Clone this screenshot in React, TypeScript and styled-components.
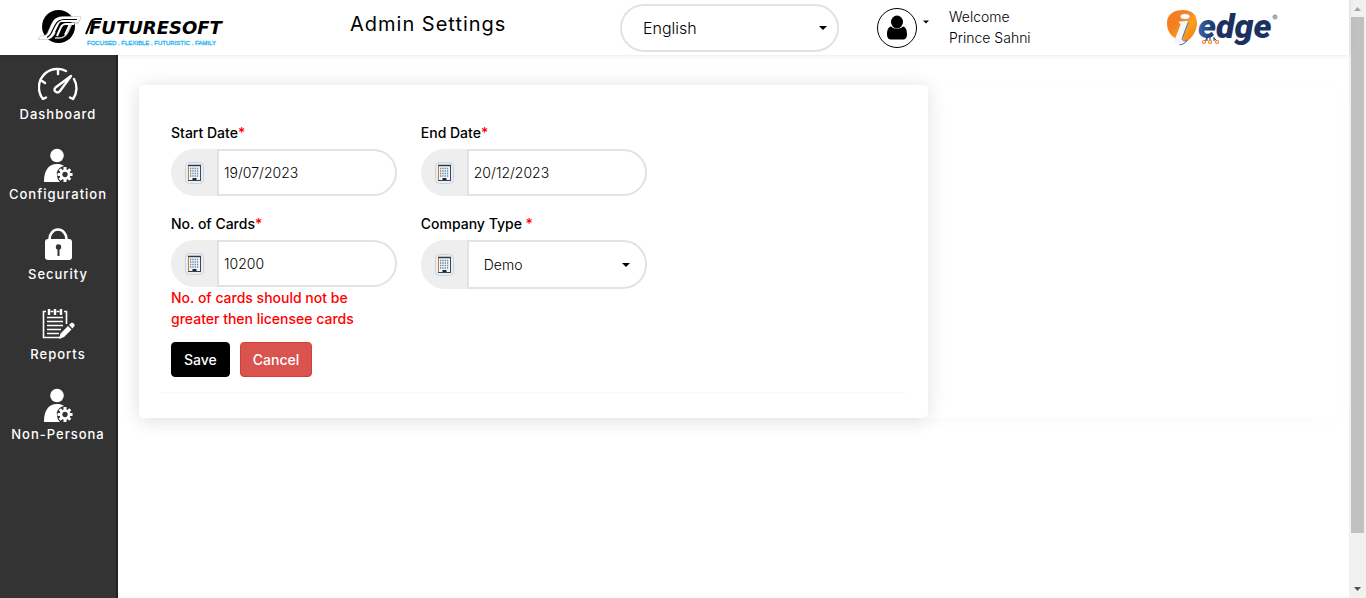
import React from "react";
import styled, { createGlobalStyle } from "styled-components";

const GlobalStyle = createGlobalStyle`
  *, *::before, *::after { box-sizing: border-box; }
  body {
    margin: 0;
    background: #fff;
    color: #000;
    font-family: Inter, "Liberation Sans", sans-serif;
    font-size: 14px;
    line-height: 21px;
  }
  button, input, select { font-family: inherit; }
`;

const Shell = styled.div`
  display: flex;
  height: 100vh;
`;

const Page = styled.div`
  flex: 1;
  min-width: 0;
  display: flex;
  flex-direction: column;
`;

const Header = styled.header`
  position: relative;
  display: grid;
  grid-template-columns: 350fr 270fr 257fr 290fr 182fr;
  height: 55px;
  flex: none;
  background: #fff;
  box-shadow: 0 0 5px rgba(0, 0, 0, 0.12);
`;

const LogoLink = styled.a<{ $indent?: number }>`
  display: block;
  height: 48px;
  padding-left: ${(p) => p.$indent ?? 0}px;
  svg { display: block; overflow: visible; }
`;

const Title = styled.h1`
  margin: 0;
  padding-top: 12px;
  font-size: 20px;
  line-height: 24px;
  font-weight: 400;
  letter-spacing: 1px;
  white-space: nowrap;
`;

const SelectWrap = styled.div`
  display: grid;
  flex: 1;
  min-width: 0;
  align-items: center;
  > * { grid-area: 1 / 1; }
  > svg { justify-self: end; margin-right: 12px; pointer-events: none; }
`;

const LanguageWrap = styled(SelectWrap)`
  width: 219px;
  height: 48px;
  margin-top: 4px;
`;

const CompanyWrap = styled(SelectWrap)`
  > svg { margin-right: 17px; }
`;

const Select = styled.select<{ $large?: boolean }>`
  appearance: none;
  width: 100%;
  height: ${(p) => (p.$large ? 48 : 49)}px;
  padding: 0 ${(p) => (p.$large ? 21 : 15)}px;
  border: 2px solid #e2e2e2;
  border-radius: ${(p) => (p.$large ? "24px" : "0 24px 24px 0")};
  background: #fff;
  color: #000;
  font-size: ${(p) => (p.$large ? 16 : 14)}px;
  font-weight: 300;
`;

const User = styled.div`
  display: flex;
  align-items: flex-start;
  padding-top: 8px;
`;

const AvatarButton = styled.button`
  display: flex;
  gap: 6px;
  padding: 0;
  border: 0;
  background: none;
  > svg:last-child { margin-top: 12px; }
`;

const Avatar = styled.span`
  display: flex;
  align-items: center;
  justify-content: center;
  width: 40px;
  height: 40px;
  border: 1px solid #000;
  border-radius: 50%;
`;

const Greeting = styled.p`
  margin: -2px 0 0 20px;
  font-weight: 300;
`;

const Body = styled.div`
  display: flex;
  flex: 1;
`;

const Sidebar = styled.nav`
  flex: none;
  width: 118px;
  padding-top: 12px;
  border-right: 2px solid #222;
  background: #333;
`;

const NavItem = styled.a`
  display: flex;
  flex-direction: column;
  align-items: center;
  height: 80px;
  color: #fff;
  font-size: 13px;
  line-height: 20px;
  font-weight: 500;
  letter-spacing: 1px;
  text-decoration: none;
  white-space: nowrap;
`;

const Main = styled.main`
  flex: 1;
  min-width: 0;
  padding: 30px 12px 30px 21px;
`;

const Panel = styled.div`
  display: grid;
  grid-template-columns: 2fr 1fr;
  gap: 14px;
  border-radius: 5px;
  box-shadow: 0 4px 20px rgba(0, 0, 0, 0.02);
`;

const Card = styled.section`
  padding: 37px 21px 25px;
  border-radius: 5px;
  background: #fff;
  box-shadow: 0 2px 20px rgba(0, 0, 0, 0.12);
`;

const Fields = styled.form`
  padding: 0 11px;
`;

const FieldGrid = styled.div`
  display: grid;
  grid-template-columns: repeat(3, minmax(0, 1fr));
  gap: 17px 24px;
`;

const FieldCell = styled.div<{ $rowStart?: boolean }>`
  ${(p) => p.$rowStart && "grid-column-start: 1;"}
`;

const Label = styled.label`
  display: block;
  margin-bottom: 6px;
  font-weight: 500;
`;

const Required = styled.span`
  color: #f00;
`;

const Group = styled.div`
  display: flex;
`;

const Addon = styled.span`
  display: flex;
  flex: none;
  align-items: center;
  justify-content: center;
  width: 46px;
  border-radius: 24px 0 0 24px;
  background: #eee;
`;

const TextInput = styled.input`
  flex: 1;
  min-width: 0;
  height: 47px;
  padding: 0 5px;
  border: 2px solid #e2e2e2;
  border-radius: 0 24px 24px 0;
  background: #fff;
  color: #000;
  font-size: 14px;
  font-weight: 300;
`;

const ErrorText = styled.p`
  margin: 0;
  color: #f00;
  font-weight: 500;
`;

const Actions = styled.div`
  display: flex;
  gap: 10px;
  margin-top: 13px;
`;

const Button = styled.button<{ $danger?: boolean }>`
  height: 35px;
  padding: 0 12px;
  border: 1px solid ${(p) => (p.$danger ? "#d43f3a" : "#000")};
  border-radius: 4px;
  background: ${(p) => (p.$danger ? "#d9534f" : "#000")};
  color: #fff;
  font-size: 14px;
  font-weight: 500;
`;

const Rule = styled.hr`
  height: 1px;
  margin: 15px 0 0;
  border: 0;
  background: #f9f9f9;
`;

const ScrollTrack = styled.div`
  display: flex;
  flex-direction: column;
  align-items: center;
  flex: none;
  width: 17px;
  background: #f1f1f1;
`;

const ScrollThumb = styled.div`
  flex: 516;
  width: 13px;
  background: #c1c1c1;
`;

const ScrollRest = styled.div`
  flex: 48;
`;

const Caret = ({ width = 8 }: { width?: number }) => (
  <svg width={width} height="4" viewBox="0 0 8 4" aria-hidden="true">
    <path d="M0 0h8L4 4z" fill="#000" />
  </svg>
);

const FutureSoftLogo = () => (
  <svg width="190" height="48" viewBox="0 0 190 48" role="img" aria-label="FutureSoft">
    <circle cx="22.500" cy="26.500" r="16.500" fill="#000" />
    <path d="M45 17H27c-6 0-9 2-11 7l-4 9c-1 2-2 3-4 3H5l-2 3h7c4 0 6-2 8-5l1-2M45 17l-3 6h-6l-4 9c-2 4-4 6-9 6h-4" fill="none" stroke="#ccc" strokeWidth="1.600" />
    <path d="M45 17H27c-6 0-9 2-11 7l-4 9c-1 2-2 3-4 3H5l-2 3h7c4 0 6-2 8-5l5-10c1-2 2-2 4-2h15z" fill="#fff" />
    <path d="M41 19.500H28c-5 0-7 2-9 6l-4 8c-1 2-2 3-4 4" fill="none" stroke="#000" strokeWidth="1.200" />
    <path d="M38 24h-8c-3 0-4 1-5 3l-4 9M34 24l-5 11" fill="none" stroke="#fff" strokeWidth="2" />
    <path d="M50 34l5-12c1-2 2-3 5-3h6" fill="none" stroke="#000" strokeWidth="2" />
    <text x="53" y="34" fontFamily="DejaVu Sans" fontSize="18" fontWeight="700" fontStyle="italic">FUTURESOFT</text>
    <text x="51" y="45" fontFamily="Liberation Sans" fontSize="6" fill="#22b5ef" stroke="#22b5ef" strokeWidth=".3">FOCUSED . FLEXIBLE . FUTURISTIC . FAMILY</text>
  </svg>
);

const EdgeLogo = () => (
  <svg width="114" height="48" viewBox="0 0 114 48" role="img" aria-label="i edge">
    <defs>
      <linearGradient id="orange" x1="0" y1="0" x2="1" y2="1">
        <stop offset="0" stopColor="#f58020" />
        <stop offset=".35" stopColor="#f57f20" />
        <stop offset=".6" stopColor="#f9a11b" />
        <stop offset="1" stopColor="#ee6a22" />
      </linearGradient>
      <linearGradient id="navy" x1="0" y1="0" x2="1" y2="0">
        <stop offset="0" stopColor="#3465b0" />
        <stop offset=".25" stopColor="#1d3160" />
      </linearGradient>
    </defs>
    <path d="M0 23C0 14 7 10 16 10c9 0 14 5 14 13 0 10-7 17-15 22l-5-1-2-6C3 35 0 30 0 23z" fill="url(#orange)" />
    <ellipse cx="18" cy="16.500" rx="4.500" ry="2.500" fill="#fff" stroke="#c8ccd4" strokeWidth=".6" />
    <path d="M11 22c3-1 6-1 11-1l-6 16c-1 3 1 4 5 3-3 3-6 5-9 5-4 0-5-3-4-6l5-13c1-2 0-3-2-4z" fill="#f4f6fa" />
    <path d="M21.500 21.500l-6 16c-1 3 1 4 5 3-3 3-5 4-8 4.500" fill="none" stroke="#4a5c86" strokeWidth=".9" />
    <text x="31" y="38" fontFamily="Roboto" fontSize="34" fontWeight="900" fontStyle="italic" fill="url(#navy)">edge</text>
    <path d="M40 37v4M43 37v4M47 37v4M40 38l-2 3M47 38l3 3" stroke="#1d3160" strokeWidth="1" />
    <g fill="#fff" stroke="#f58220" strokeWidth="1.200">
      <circle cx="37" cy="42" r="1.500" />
      <circle cx="43" cy="42" r="1.500" />
      <circle cx="50" cy="42" r="1.500" />
    </g>
    <circle cx="108" cy="17" r="2" fill="none" stroke="#465579" strokeWidth=".7" />
    <path d="M107.500 18v-2h1l-.5 1 .7 1" fill="none" stroke="#465579" strokeWidth=".5" />
  </svg>
);

const DashboardIcon = () => (
  <svg width="40" height="37" viewBox="0 0 40 37" fill="none" stroke="#fff" strokeWidth="2.400" strokeLinecap="round" strokeLinejoin="round">
    <path d="M28 4A18.500 18.500 0 0 0 5 32l3-1.500M36 12a18.500 18.500 0 0 1-1 20l-3-1.500M20 3v4M4 14l3 2" />
    <path d="M33 9L17.500 20.500c-3 3 1.500 7 4.500 3.500z" />
  </svg>
);

const GEAR_ANGLES = [0, 45, 90, 135, 180, 225, 270, 315];

const PersonGearIcon = () => (
  <svg width="40" height="37" viewBox="0 0 40 37">
    <circle cx="19" cy="8.500" r="6.800" fill="#fff" />
    <path d="M6 35c0-11 4-18 13-18 3 0 5 .5 7 2-5 1-8 5-7 9 0 3 1 5 3 7z" fill="#fff" />
    <g transform="translate(27 27.500)">
      {GEAR_ANGLES.map((a) => (
        <rect key={a} x="-1.500" y="-7.500" width="3" height="4" fill="#fff" transform={`rotate(${a})`} />
      ))}
      <circle r="4" fill="none" stroke="#fff" strokeWidth="2.600" />
    </g>
  </svg>
);

const LockIcon = () => (
  <svg width="40" height="37" viewBox="0 0 40 37">
    <path d="M11.500 15v-3a8.500 9.500 0 0 1 17 0v3" fill="none" stroke="#fff" strokeWidth="2.600" />
    <rect x="7" y="12" width="27" height="21" rx="3" fill="#fff" />
    <circle cx="20.500" cy="20" r="2.700" fill="#333" />
    <path d="M19.500 21h2v8h-2z" fill="#333" />
  </svg>
);

const ReportIcon = () => (
  <svg width="40" height="37" viewBox="0 0 40 37" fill="none" stroke="#fff">
    <path d="M8 4.500H5.500v26H23M26 4.500h2.500V17" strokeWidth="1.600" />
    <path d="M11 2v6M17 2v6M23 2v6" strokeWidth="2.400" />
    <path d="M12.500 4.500h3M18.500 4.500h3" strokeWidth="1.400" />
    <path d="M9 10.500h16M9 14.500h16M9 18.500h16M9 22.500h14M9 26.500h12" strokeWidth="1.600" />
    <path d="M21 32l1.500-5.500L30 19l3.500 3.500L26 30zM31 18l2-2c1.500-1 4.500 1.500 3.500 3L34.500 21.500z" fill="#fff" stroke="none" />
  </svg>
);

const UserIcon = () => (
  <svg width="22" height="26" viewBox="0 0 22 26" aria-hidden="true">
    <ellipse cx="11" cy="7" rx="6" ry="6.500" />
    <path d="M5 11.500c3 3 9 3 12 0 3 .5 4 4 4 8 0 3-1.500 5-4 5H5c-2.500 0-4-2-4-5 0-4 1-7.500 4-8z" />
  </svg>
);

const BuildingIcon = () => (
  <svg width="20" height="22" viewBox="0 0 20 22" aria-hidden="true">
    <rect x="1.500" y=".5" width="18" height="21" rx="4" fill="#e8eef3" stroke="#cbd5de" />
    <rect x="4.500" y="3.500" width="12" height="15" fill="#f3f6f9" stroke="#4b4060" />
    <path d="M4 3.500h13" stroke="#2f3c46" strokeWidth="1.500" />
    <path d="M6 6.500h9M6 9h9M6 11.500h9M6 14h9" stroke="#64849f" strokeWidth="1.400" strokeDasharray="1.300 1" />
    <path d="M4.500 4v14" stroke="#c97b35" />
    <path d="M8.500 16h4v3h-4z" fill="#1c2530" />
    <path d="M4 18.500h13" stroke="#34424e" />
  </svg>
);

const navItems = [
  { label: "Dashboard", Icon: DashboardIcon },
  { label: "Configuration", Icon: PersonGearIcon },
  { label: "Security", Icon: LockIcon },
  { label: "Reports", Icon: ReportIcon },
  { label: "Non-Persona", Icon: PersonGearIcon },
];

type FieldProps = {
  id: string;
  label: string;
  error?: string;
  rowStart?: boolean;
  children: React.ReactNode;
};

const Field = ({ id, label, error, rowStart, children }: FieldProps) => (
  <FieldCell $rowStart={rowStart}>
    <Label htmlFor={id}>
      {label}
      <Required>*</Required>
    </Label>
    <Group>
      <Addon>
        <BuildingIcon />
      </Addon>
      {children}
    </Group>
    {error && <ErrorText>{error}</ErrorText>}
  </FieldCell>
);

export default function App() {
  return (
    <Shell>
      <GlobalStyle />
      <Page>
        <Header>
          <LogoLink href="#" $indent={36}>
            <FutureSoftLogo />
          </LogoLink>
          <Title>Admin Settings</Title>
          <LanguageWrap>
            <Select $large aria-label="Language" defaultValue="English">
              <option>English</option>
            </Select>
            <Caret />
          </LanguageWrap>
          <User>
            <AvatarButton type="button" aria-label="Account menu">
              <Avatar>
                <UserIcon />
              </Avatar>
              <Caret width={6} />
            </AvatarButton>
            <Greeting>
              Welcome
              <br />
              Prince Sahni
            </Greeting>
          </User>
          <LogoLink href="#">
            <EdgeLogo />
          </LogoLink>
        </Header>
        <Body>
          <Sidebar>
            {navItems.map(({ label, Icon }) => (
              <NavItem href="#" key={label}>
                <Icon />
                {label}
              </NavItem>
            ))}
          </Sidebar>
          <Main>
            <Panel>
              <Card>
                <Fields>
                  <FieldGrid>
                    <Field id="start" label="Start Date" rowStart>
                      <TextInput id="start" defaultValue="19/07/2023" />
                    </Field>
                    <Field id="end" label="End Date">
                      <TextInput id="end" defaultValue="20/12/2023" />
                    </Field>
                    <Field
                      id="cards"
                      label="No. of Cards"
                      error="No. of cards should not be greater then licensee cards"
                      rowStart
                    >
                      <TextInput id="cards" defaultValue="10200" />
                    </Field>
                    <Field id="company" label="Company Type ">
                      <CompanyWrap>
                        <Select id="company" defaultValue="Demo">
                          <option>Demo</option>
                        </Select>
                        <Caret />
                      </CompanyWrap>
                    </Field>
                  </FieldGrid>
                  <Actions>
                    <Button type="button">Save</Button>
                    <Button type="button" $danger>
                      Cancel
                    </Button>
                  </Actions>
                </Fields>
                <Rule />
              </Card>
            </Panel>
          </Main>
        </Body>
      </Page>
      <ScrollTrack aria-hidden="true">
        <svg width="17" height="17" viewBox="0 0 17 17">
          <path d="M5 11h7L8.500 7z" fill="#a3a3a3" />
        </svg>
        <ScrollThumb />
        <ScrollRest />
        <svg width="17" height="17" viewBox="0 0 17 17">
          <path d="M5 6h7l-3.500 4z" fill="#505050" />
        </svg>
      </ScrollTrack>
    </Shell>
  );
}
